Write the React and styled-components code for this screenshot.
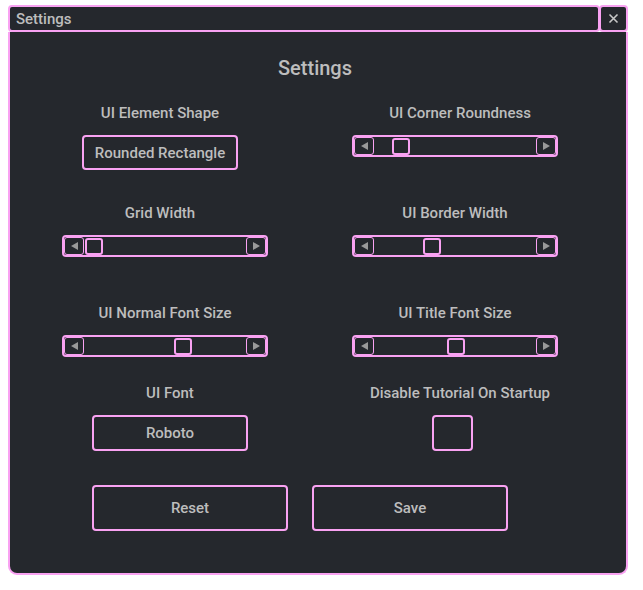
import React from "react";
import styled, { createGlobalStyle } from "styled-components";

const PINK = "#f9a2f2";
const BG = "#25282d";
const TEXT = "#bdbdbd";

const Global = createGlobalStyle`
  html, body { margin: 0; padding: 0; background: #ffffff; }
  body { font-family: Roboto, "Noto Sans", sans-serif; }
`;

const Page = styled.div`
  padding: 5px 0 0 8px;
`;

const Window = styled.div`
  width: 620px;
  display: flex;
  flex-direction: column;
`;

const TitleRow = styled.div`
  display: flex;
  height: 27px;
`;

const TitleBox = styled.div`
  flex: 1;
  box-sizing: border-box;
  background: ${BG};
  border: 2px solid ${PINK};
  border-radius: 4px;
  color: ${TEXT};
  font-size: 15px;
  font-weight: 500;
  display: flex;
  align-items: center;
  padding-left: 6px;
`;

const CloseBox = styled.div`
  width: 29px;
  margin-left: -1px;
  box-sizing: border-box;
  background: ${BG};
  border: 2px solid ${PINK};
  border-radius: 4px;
  display: flex;
  align-items: center;
  justify-content: center;
`;

const Body = styled.div`
  box-sizing: border-box;
  height: 543px;
  background: ${BG};
  border: 2px solid ${PINK};
  border-top: none;
  border-radius: 0 0 9px 9px;
  display: flex;
  flex-direction: column;
  padding-top: 24px;
`;

const Heading = styled.div`
  text-align: center;
  font-size: 20px;
  line-height: 24px;
  font-weight: 500;
  color: ${TEXT};
  margin: 0 0 23px -6px;
`;

const Row = styled.div`
  display: grid;
  grid-template-columns: 300px 300px;
  height: ${(p) => p.$h}px;
  align-items: start;
`;

const Cell = styled.div`
  display: flex;
  flex-direction: column;
  align-items: center;
`;

const Label = styled.div`
  font-size: 15px;
  line-height: 20px;
  font-weight: 500;
  color: ${TEXT};
  white-space: nowrap;
  margin-left: ${(p) => p.$dx || 0}px;
  margin-right: ${(p) => -(p.$dx || 0)}px;
  margin-bottom: 12px;
`;

const Shift = styled.div`
  display: flex;
  margin-left: ${(p) => p.$dx || 0}px;
  margin-right: ${(p) => -(p.$dx || 0)}px;
`;

const Button = styled.div`
  box-sizing: border-box;
  width: ${(p) => p.$w}px;
  height: ${(p) => p.$h}px;
  border: 2px solid ${PINK};
  border-radius: 4px;
  background: ${BG};
  color: ${TEXT};
  font-size: 15px;
  font-weight: 500;
  display: flex;
  align-items: center;
  justify-content: center;
  white-space: nowrap;
`;

const Checkbox = styled.div`
  box-sizing: border-box;
  width: 41px;
  height: 36px;
  border: 2px solid ${PINK};
  border-radius: 4px;
`;

const SliderFrame = styled.div`
  box-sizing: border-box;
  width: 206px;
  height: 22px;
  border: 2px solid ${PINK};
  border-radius: 4px;
  display: flex;
`;

const ArrowBtn = styled.div`
  box-sizing: border-box;
  width: 20px;
  height: 18px;
  border: 1px solid ${PINK};
  border-radius: 3px;
  display: flex;
  align-items: center;
  justify-content: center;
`;

const Track = styled.div`
  flex: 1;
  position: relative;
`;

const Thumb = styled.div`
  position: absolute;
  top: 1px;
  box-sizing: border-box;
  width: 18px;
  height: 17px;
  border: 2px solid ${PINK};
  border-radius: 3px;
`;

const ButtonRow = styled.div`
  display: flex;
  gap: 24px;
  margin-left: 82px;
`;

const Tri = ({ dir }) => (
  <svg width="9" height="10" viewBox="0 0 9 10">
    {dir === "left" ? (
      <polygon points="8,1 8,9 1,5" fill="#9a9a9a" />
    ) : (
      <polygon points="1,1 1,9 8,5" fill="#9a9a9a" />
    )}
  </svg>
);

const Slider = ({ pos }) => (
  <SliderFrame>
    <ArrowBtn>
      <Tri dir="left" />
    </ArrowBtn>
    <Track>
      <Thumb style={{ left: pos }} />
    </Track>
    <ArrowBtn>
      <Tri dir="right" />
    </ArrowBtn>
  </SliderFrame>
);

export default function App() {
  return (
    <>
      <Global />
      <Page>
        <Window>
          <TitleRow>
            <TitleBox>Settings</TitleBox>
            <CloseBox>
              <svg width="11" height="11" viewBox="0 0 11 11">
                <path d="M1.5 1.5 L9.5 9.5 M9.5 1.5 L1.5 9.5" stroke="#c8c8c8" strokeWidth="1.6" />
              </svg>
            </CloseBox>
          </TitleRow>
          <Body>
            <Heading>Settings</Heading>
            <Row $h={100}>
              <Cell>
                <Label>UI Element Shape</Label>
                <Shift>
                  <Button $w={156} $h={35}>Rounded Rectangle</Button>
                </Shift>
              </Cell>
              <Cell>
                <Label>UI Corner Roundness</Label>
                <Shift $dx={-5}>
                  <Slider pos={18} />
                </Shift>
              </Cell>
            </Row>
            <Row $h={100}>
              <Cell>
                <Label>Grid Width</Label>
                <Shift $dx={5}>
                  <Slider pos={1} />
                </Shift>
              </Cell>
              <Cell>
                <Label $dx={-5}>UI Border Width</Label>
                <Shift $dx={-5}>
                  <Slider pos={49} />
                </Shift>
              </Cell>
            </Row>
            <Row $h={80}>
              <Cell>
                <Label $dx={5}>UI Normal Font Size</Label>
                <Shift $dx={5}>
                  <Slider pos={90} />
                </Shift>
              </Cell>
              <Cell>
                <Label $dx={-5}>UI Title Font Size</Label>
                <Shift $dx={-5}>
                  <Slider pos={73} />
                </Shift>
              </Cell>
            </Row>
            <Row $h={102}>
              <Cell>
                <Label $dx={10}>UI Font</Label>
                <Shift $dx={10}>
                  <Button $w={156} $h={36}>Roboto</Button>
                </Shift>
              </Cell>
              <Cell>
                <Label>Disable Tutorial On Startup</Label>
                <Shift $dx={-8}>
                  <Checkbox />
                </Shift>
              </Cell>
            </Row>
            <ButtonRow>
              <Button $w={196} $h={46}>Reset</Button>
              <Button $w={196} $h={46}>Save</Button>
            </ButtonRow>
          </Body>
        </Window>
      </Page>
    </>
  );
}
